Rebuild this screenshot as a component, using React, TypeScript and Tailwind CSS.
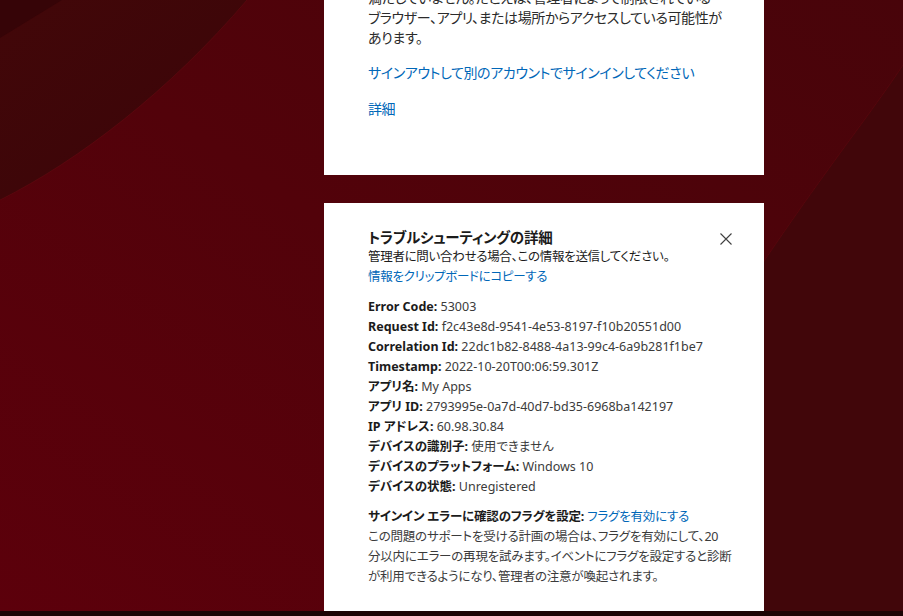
const details = [
  { label: "Error Code:", value: "53003" },
  { label: "Request Id:", value: "f2c43e8d-9541-4e53-8197-f10b20551d00" },
  { label: "Correlation Id:", value: "22dc1b82-8488-4a13-99c4-6a9b281f1be7" },
  { label: "Timestamp:", value: "2022-10-20T00:06:59.301Z" },
  { label: "アプリ名:", value: "My Apps" },
  { label: "アプリ ID:", value: "2793995e-0a7d-40d7-bd35-6968ba142197" },
  { label: "IP アドレス:", value: "60.98.30.84" },
  { label: "デバイスの識別子:", value: "使用できません" },
  { label: "デバイスのプラットフォーム:", value: "Windows 10" },
  { label: "デバイスの状態:", value: "Unregistered" },
];

function Backdrop() {
  return (
    <svg
      className="absolute inset-0 h-full w-full"
      viewBox="0 0 903 616"
      preserveAspectRatio="none"
    >
      <defs>
        <linearGradient id="base" x1="1" y1="0" x2="0" y2="1">
          <stop offset="0" stopColor="#48040a" />
          <stop offset="0.5" stopColor="#52020a" />
          <stop offset="1" stopColor="#5c000b" />
        </linearGradient>
        <linearGradient id="corner" x1="0" y1="0" x2="1" y2="1">
          <stop offset="0" stopColor="#420709" />
          <stop offset="1" stopColor="#3a0508" />
        </linearGradient>
      </defs>
      <rect width="903" height="616" fill="url(#base)" />
      <path d="M0 200 C80 160 170 90 247 0 L0 0 Z" fill="url(#corner)" />
      <path d="M0 200 C80 160 170 90 247 0" stroke="#6b0a12" strokeOpacity="0.45" fill="none" />
      <path d="M0 0 L62 0 L0 38 Z" fill="#360407" />
      <path d="M903 65 C860 130 800 200 700 360 L700 616 L903 616 Z" fill="#41060a" />
      <path d="M903 65 C860 130 800 200 700 360" stroke="#6b0a12" strokeOpacity="0.4" fill="none" />
    </svg>
  );
}

export default function App() {
  return (
    <div className="relative h-[616px] w-full overflow-hidden bg-[#52000a] font-['Noto_Sans','Noto_Sans_CJK_JP',sans-serif] [font-feature-settings:'palt']">
      <Backdrop />
      <div className="relative flex h-full flex-col">
        <div className="flex-1 pl-[324px]">
          <div className="-mt-[52px] w-[440px] bg-white px-[44px] pt-[40px] pb-[56px] text-[14px] leading-[20px] tracking-[-0.4px] whitespace-nowrap text-[#2b2b2b]">
            <p>
              満たしていません。たとえば、管理者によって制限されている
              <br />
              ブラウザー、アプリ、または場所からアクセスしている可能性が
              <br />
              あります。
            </p>
            <p className="mt-[15px] text-[#0067b8]">
              サインアウトして別のアカウントでサインインしてください
            </p>
            <p className="mt-[16px] text-[#0067b8]">詳細</p>
          </div>

          <div className="mt-[28px] w-[440px] bg-white px-[44px] pt-[24px] pb-[24px] text-[12.5px] leading-[20px] whitespace-nowrap text-[#1b1b1b]">
            <div className="flex items-start justify-between">
              <div>
                <h2 className="text-[14.5px] font-bold tracking-[-0.2px]">
                  トラブルシューティングの詳細
                </h2>
                <p className="tracking-[-0.3px]">
                  管理者に問い合わせる場合、この情報を送信してください。
                </p>
                <p className="tracking-[-0.3px] text-[#0067b8]">
                  情報をクリップボードにコピーする
                </p>
              </div>
              <svg
                className="-mr-[12px] mt-[6px] h-[12px] w-[12px]"
                viewBox="0 0 12 12"
                fill="none"
                stroke="#404040"
                strokeWidth="1.1"
              >
                <path d="M0.5 0.5 L11.5 11.5 M11.5 0.5 L0.5 11.5" />
              </svg>
            </div>

            <div className="mt-[10px]">
              {details.map((d) => (
                <p key={d.label}>
                  <span className="font-bold">{d.label}</span>{" "}
                  <span className="text-[#3b3b3b]">{d.value}</span>
                </p>
              ))}
            </div>

            <div className="mt-[10px] tracking-[-0.2px]">
              <p>
                <span className="font-bold">サインイン エラーに確認のフラグを設定:</span>{" "}
                <span className="text-[#0067b8]">フラグを有効にする</span>
              </p>
              <p className="text-[#3b3b3b]">
                この問題のサポートを受ける計画の場合は、フラグを有効にして、20
                <br />
                分以内にエラーの再現を試みます。イベントにフラグを設定すると診断
                <br />
                が利用できるようになり、管理者の注意が喚起されます。
              </p>
            </div>
          </div>
        </div>
        <div className="h-[5px] bg-[#1c0404]" />
      </div>
    </div>
  );
}
